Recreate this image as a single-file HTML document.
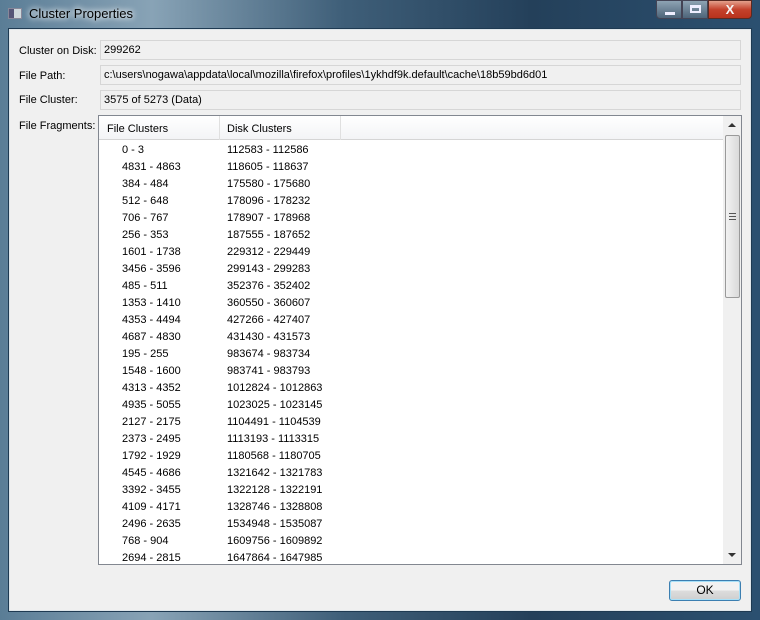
<!DOCTYPE html>
<html><head><style>
*{margin:0;padding:0;box-sizing:border-box}
body{width:760px;height:620px;overflow:hidden;background:#1c3a55;font-family:"Liberation Sans",sans-serif;font-size:11px;color:#000;position:relative}
.frame{position:absolute;left:0;top:0;width:760px;height:620px;background:linear-gradient(90deg,#5a7d96 0%,#88a3b6 20%,#3f5f79 45%,#24405a 70%,#2b5070 100%)}
.title{position:absolute;left:29px;top:6px;font-size:13px;color:#000;text-shadow:0 0 6px #fff,0 0 8px #fff}
.client{position:absolute;left:8px;top:28px;width:744px;height:584px;background:#f0f0f0;border:1px solid #1e3a52;box-shadow:inset 0 0 0 1px #dfe6ea}
.lbl{position:absolute;left:19px}
.fld{position:absolute;left:100px;width:641px;height:20px;border:1px solid #d6d6d6;background:#f0f0f0;padding:3px 0 0 3px}
.list{position:absolute;left:98px;top:115px;width:644px;height:450px;border:1px solid #828790;background:#fff;overflow:hidden}
.hdr{position:absolute;left:0;top:0;width:625px;height:24px;background:linear-gradient(#fff,#f3f4f6);border-bottom:1px solid #d5d5d5}
.hdr span{position:absolute;top:7px}
.sep{position:absolute;top:0;width:1px;height:24px;background:#e0e0e0}
.row{position:absolute;height:17px}
.sb{position:absolute;right:0;top:0;width:18px;height:448px;background:#f0f0f0}
.thumb{position:absolute;left:2px;top:19px;width:15px;height:163px;border:1px solid #9a9a9a;border-radius:2px;background:linear-gradient(90deg,#f2f2f2,#dadada)}
.ok{position:absolute;left:669px;top:580px;width:72px;height:21px;border:1px solid #3c7fb1;border-radius:3px;background:linear-gradient(#f2f2f2 50%,#dddddd 50%,#cfcfcf);box-shadow:inset 0 0 0 1px #a8e0f8;text-align:center;line-height:19px;font-size:12px}
</style></head><body>
<div class="frame"></div>
<div style="position:absolute;left:8px;top:8px;width:14px;height:11px;background:#cfd8dc;border:1px solid #889"><div style="width:5px;height:9px;background:#557"></div></div>
<div class="title">Cluster Properties</div>
<div style="position:absolute;left:656px;top:0;width:26px;height:19px;border:1px solid #445;border-radius:0 0 0 4px;background:linear-gradient(#8ea3b3,#4d6479)"><div style="position:absolute;left:8px;top:11px;width:10px;height:3px;background:#eef"></div></div>
<div style="position:absolute;left:682px;top:0;width:26px;height:19px;border:1px solid #445;background:linear-gradient(#8ea3b3,#4d6479)"><div style="position:absolute;left:7px;top:4px;width:11px;height:8px;border:2px solid #eef;border-top-width:3px"></div></div>
<div style="position:absolute;left:708px;top:0;width:44px;height:19px;border:1px solid #5a2a22;border-radius:0 0 4px 0;background:linear-gradient(#e4a08c,#c4422c 50%,#b8321c);color:#f4f4f4;font-weight:bold;font-size:13px;text-align:center;line-height:17px">X</div>
<div class="client"></div>
<div class="lbl" style="top:45px">Cluster on Disk:</div>
<div class="fld" style="top:40px">299262</div>
<div class="lbl" style="top:70px">File Path:</div>
<div class="fld" style="top:65px">c:\users\nogawa\appdata\local\mozilla\firefox\profiles\1ykhdf9k.default\cache\18b59bd6d01</div>
<div class="lbl" style="top:94px">File Cluster:</div>
<div class="fld" style="top:90px">3575 of 5273 (Data)</div>
<div class="lbl" style="top:120px">File Fragments:</div>
<div class="list">
<div class="hdr"><span style="left:8px">File Clusters</span><div class="sep" style="left:120px"></div><span style="left:128px">Disk Clusters</span><div class="sep" style="left:241px"></div></div>
<div id="rows"></div>
<div class="sb"><div style="position:absolute;left:5px;top:7px;border:4px solid transparent;border-bottom:4px solid #333;border-top:0"></div><div class="thumb"><div style="position:absolute;left:3px;top:77px;width:7px;height:7px;border-top:1px solid #555;border-bottom:1px solid #555"><div style="margin-top:2px;height:1px;background:#555"></div></div></div><div style="position:absolute;left:5px;top:437px;border:4px solid transparent;border-top:4px solid #333;border-bottom:0"></div></div>
</div>
<div class="ok">OK</div>
<script>
var d=[["0 - 3","112583 - 112586"],["4831 - 4863","118605 - 118637"],["384 - 484","175580 - 175680"],["512 - 648","178096 - 178232"],["706 - 767","178907 - 178968"],["256 - 353","187555 - 187652"],["1601 - 1738","229312 - 229449"],["3456 - 3596","299143 - 299283"],["485 - 511","352376 - 352402"],["1353 - 1410","360550 - 360607"],["4353 - 4494","427266 - 427407"],["4687 - 4830","431430 - 431573"],["195 - 255","983674 - 983734"],["1548 - 1600","983741 - 983793"],["4313 - 4352","1012824 - 1012863"],["4935 - 5055","1023025 - 1023145"],["2127 - 2175","1104491 - 1104539"],["2373 - 2495","1113193 - 1113315"],["1792 - 1929","1180568 - 1180705"],["4545 - 4686","1321642 - 1321783"],["3392 - 3455","1322128 - 1322191"],["4109 - 4171","1328746 - 1328808"],["2496 - 2635","1534948 - 1535087"],["768 - 904","1609756 - 1609892"],["2694 - 2815","1647864 - 1647985"]];
var h="";d.forEach(function(r,i){var t=28+i*17;h+='<div class="row" style="left:23px;top:'+t+'px">'+r[0]+'</div><div class="row" style="left:128px;top:'+t+'px">'+r[1]+'</div>';});
document.getElementById("rows").innerHTML=h;
</script>
</body></html>
